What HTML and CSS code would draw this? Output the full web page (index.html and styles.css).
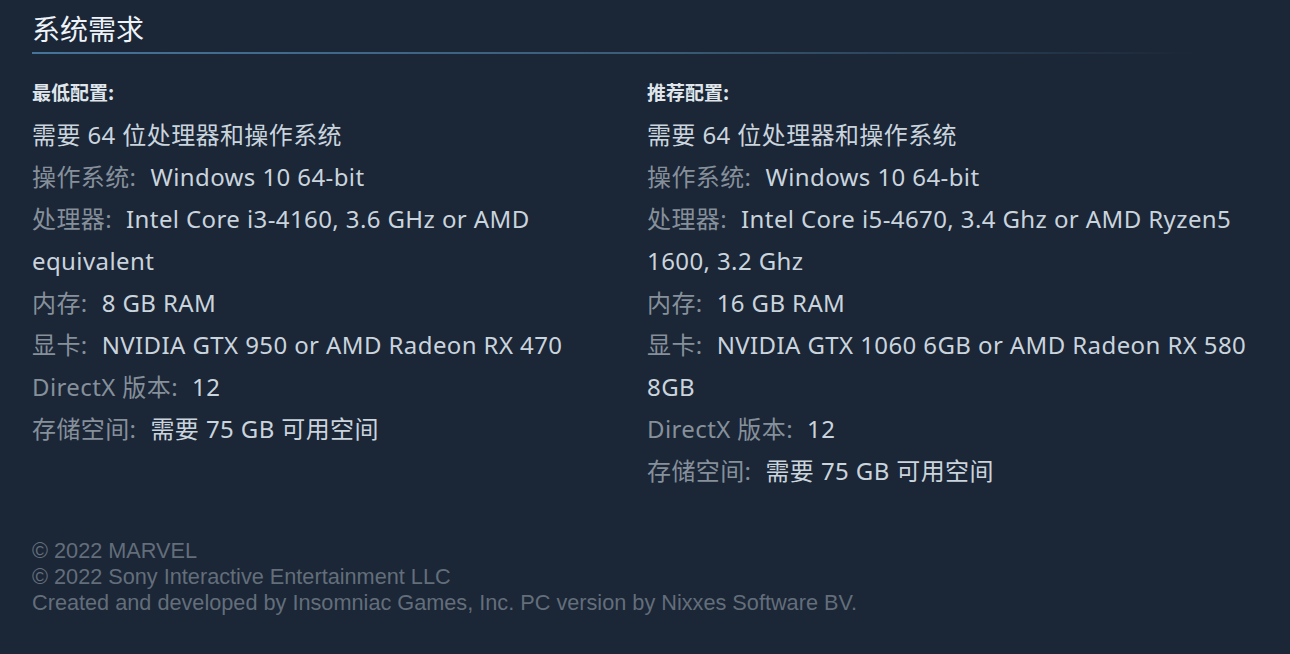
FILE: index.html
```html
<!DOCTYPE html>
<html lang="zh-CN">
<head>
<meta charset="utf-8">
<title>系统需求</title>
<link rel="stylesheet" href="styles.css">
</head>
<body>
<div class="page">
  <h2 class="title">系统需求</h2>
  <div class="rule"></div>
  <div class="columns">
    <div class="col">
      <div class="col-head">最低配置:</div>
      <ul class="reqs">
        <li><span class="val">需要 64 位处理器和操作系统</span></li>
        <li><span class="lbl">操作系统:</span><span class="val">Windows 10 64-bit</span></li>
        <li><span class="lbl">处理器:</span><span class="val">Intel Core i3-4160, 3.6 GHz or AMD equivalent</span></li>
        <li><span class="lbl">内存:</span><span class="val">8 GB RAM</span></li>
        <li><span class="lbl">显卡:</span><span class="val">NVIDIA GTX 950 or AMD Radeon RX 470</span></li>
        <li><span class="lbl">DirectX 版本:</span><span class="val">12</span></li>
        <li><span class="lbl">存储空间:</span><span class="val">需要 75 GB 可用空间</span></li>
      </ul>
    </div>
    <div class="col">
      <div class="col-head">推荐配置:</div>
      <ul class="reqs">
        <li><span class="val">需要 64 位处理器和操作系统</span></li>
        <li><span class="lbl">操作系统:</span><span class="val">Windows 10 64-bit</span></li>
        <li><span class="lbl">处理器:</span><span class="val">Intel Core i5-4670, 3.4 Ghz or AMD Ryzen5 1600, 3.2 Ghz</span></li>
        <li><span class="lbl">内存:</span><span class="val">16 GB RAM</span></li>
        <li><span class="lbl">显卡:</span><span class="val">NVIDIA GTX 1060 6GB or AMD Radeon RX 580 8GB</span></li>
        <li><span class="lbl">DirectX 版本:</span><span class="val">12</span></li>
        <li><span class="lbl">存储空间:</span><span class="val">需要 75 GB 可用空间</span></li>
      </ul>
    </div>
  </div>
  <div class="legal">
    <p>© 2022 MARVEL</p>
    <p>© 2022 Sony Interactive Entertainment LLC</p>
    <p>Created and developed by Insomniac Games, Inc. PC version by Nixxes Software BV.</p>
  </div>
</div>
</body>
</html>
```
FILE: styles.css
```css
html, body {
  margin: 0;
  padding: 0;
  background: #1b2637;
}
.page {
  padding: 10px 32px 0 32px;
  font-family: "Noto Sans", "Noto Sans CJK SC", sans-serif;
}
.title {
  margin: 0;
  font-family: "Noto Sans CJK SC", sans-serif;
  font-size: 28px;
  font-weight: 400;
  line-height: 36px;
  color: #eef3f7;
}
.rule {
  margin-top: 6px;
  height: 2px;
  width: 1230px;
  background: linear-gradient(to right, #46739a 0%, #3a5d78 50%, rgba(40,60,80,0) 95%);
}
.columns {
  display: grid;
  grid-template-columns: 605px 605px;
  column-gap: 10px;
  margin-top: 25px;
}
.col-head {
  font-size: 19px;
  font-weight: 700;
  color: #dfe5ea;
  line-height: 26px;
  font-family: "Noto Sans CJK SC", sans-serif;
}
.reqs {
  list-style: none;
  margin: 9px 0 0 0;
  padding: 0;
  font-size: 24px;
  letter-spacing: 0.4px;
  line-height: 42px;
}
.lbl {
  color: #86909a;
  margin-right: 14px;
}
.val {
  color: #cad4dd;
}
.legal {
  margin-top: 46px;
  font-family: "Liberation Sans", Arial, sans-serif;
  font-size: 21.7px;
  line-height: 26px;
  color: #636e7a;
}
.legal p {
  margin: 0;
}
```
